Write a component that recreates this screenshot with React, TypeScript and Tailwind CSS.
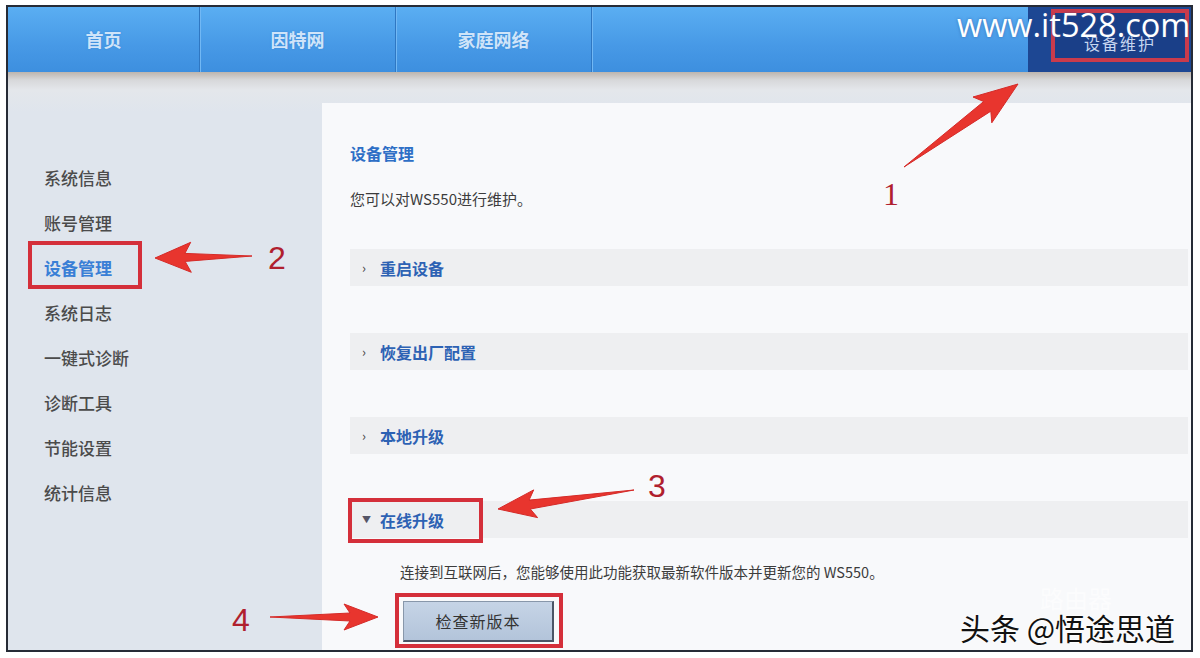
import React from 'react'

const sideItems = ['系统信息', '账号管理', '设备管理', '系统日志', '一键式诊断', '诊断工具', '节能设置', '统计信息']
const sections = ['重启设备', '恢复出厂配置', '本地升级']

function arrowPoints(tx: number, ty: number, px: number, py: number, headLen: number, headW: number, shaftW: number) {
  const len = Math.hypot(px - tx, py - ty)
  const dx = (px - tx) / len
  const dy = (py - ty) / len
  const nx = -dy
  const ny = dx
  const bx = px - dx * headLen
  const by = py - dy * headLen
  const wx = bx - dx * 6
  const wy = by - dy * 6
  const pts = [
    [tx, ty],
    [bx + nx * shaftW / 2, by + ny * shaftW / 2],
    [wx + nx * headW / 2, wy + ny * headW / 2],
    [px, py],
    [wx - nx * headW / 2, wy - ny * headW / 2],
    [bx - nx * shaftW / 2, by - ny * shaftW / 2],
  ]
  return pts.map(p => `${p[0].toFixed(1)},${p[1].toFixed(1)}`).join(' ')
}

function Arrows() {
  return (
    <svg className="absolute left-0 top-0 pointer-events-none" width="1200" height="658" viewBox="0 0 1200 658">
      <defs>
        <filter id="soft" x="-10%" y="-10%" width="120%" height="120%">
          <feGaussianBlur stdDeviation="0.6" />
        </filter>
      </defs>
      <g fill="#e8352f" stroke="#d42a28" strokeWidth="1" filter="url(#soft)">
        <polygon points={arrowPoints(904, 167, 1018, 84, 38, 32, 12)} />
        <polygon points={arrowPoints(252, 256, 155, 258, 30, 30, 8)} />
        <polygon points={arrowPoints(634, 490, 498, 509, 32, 28, 9)} />
        <polygon points={arrowPoints(270, 617, 378, 617, 28, 26, 8)} />
      </g>
    </svg>
  )
}

export default function App() {
  return (
    <div className="relative w-[1200px] h-[658px] bg-white overflow-hidden font-['Noto_Sans_CJK_SC',sans-serif]">
      <div className="ml-[6px] mt-[5px] w-[1187px] h-[647px] border-2 border-[#262b36] flex flex-col">
        {/* top nav */}
        <div className="h-[65px] flex bg-[linear-gradient(to_bottom,#5aaef2,#4799e6_60%,#3d8fdf)]">
          {['首页', '因特网', '家庭网络'].map((t, i) => (
            <div
              key={t}
              className={`flex items-center justify-center text-[18px] font-bold text-[#cfe4f9] [text-shadow:0_0_2px_#3a86d6] ${i === 0 ? 'w-[192px]' : 'w-[196px]'} border-r border-[#2f77c2] shadow-[1px_0_0_#72b8f4]`}
            >
              {t}
            </div>
          ))}
          <div className="flex-1" />
          <div className="relative w-[163px] bg-[#1d4793]">
            <div className="absolute left-[23px] top-[2px] w-[138px] h-[53px] border-[4px] border-[#c93b4c] bg-[#1a3f88] flex items-end justify-center pb-[6px]">
              <span className="text-[16px] leading-[18px] text-[#c6d6f0] tracking-[2px]">设备维护</span>
            </div>
          </div>
        </div>

        {/* body */}
        <div className="flex-1 flex bg-[linear-gradient(to_bottom,#bdb5ae_0px,#d7d8da_8px,#e4e7eb_18px,#dfe5ed_40px)]">
          <div className="w-[314px] pt-[83px] pl-[36px]">
            {sideItems.map(t => {
              const active = t === '设备管理'
              return (
                <div key={t} className="relative h-[45px] flex items-center">
                  <span className={`text-[17px] ${active ? 'text-[#3a7fd6] font-bold' : 'text-[#4b4b4b] font-medium'}`}>{t}</span>
                  {active && (
                    <span className="absolute left-[-16px] top-[-4px] w-[114px] h-[48px] border-[4px] border-[#d42f3a]" />
                  )}
                </div>
              )
            })}
          </div>

          <div className="flex-1 pt-[31px] flex flex-col">
            <div className="flex-1 bg-[#f8f9fb] pl-[28px] pr-[3px] pt-[39px]">
              <div className="h-[22px] leading-[22px] text-[16px] font-bold text-[#2e6fc6]">设备管理</div>
              <div className="mt-[24px] h-[22px] leading-[22px] text-[15px] text-[#3c3c3c]">您可以对WS550进行维护。</div>

              <div className="mt-[39px] flex flex-col gap-[47px]">
                {sections.map(s => (
                  <div key={s} className="h-[37px] bg-[#eeeff1] flex items-center pl-[12px]">
                    <span className="text-[13px] text-[#444] w-[18px]">›</span>
                    <span className="text-[16px] font-bold text-[#2d62b4]">{s}</span>
                  </div>
                ))}
                <div className="relative h-[37px] bg-[#eeeff1] flex items-center pl-[12px]">
                  <span className="text-[9px] text-[#556] w-[18px]">▼</span>
                  <span className="text-[16px] font-bold text-[#2d62b4]">在线升级</span>
                  <span className="absolute left-[-2px] top-[-3px] w-[135px] h-[45px] border-[4px] border-[#d42f3a]" />
                </div>
              </div>

              <div className="mt-[23px] ml-[50px] h-[22px] leading-[22px] text-[14.5px] text-[#3c3c3c]">
                连接到互联网后，您能够使用此功能获取最新软件版本并更新您的 WS550。
              </div>
              <div className="relative mt-[18px] ml-[53px] w-[151px] h-[41px]">
                <button className="w-full h-full bg-[linear-gradient(to_bottom,#c6d4e6,#b3c4da)] border border-[#8897aa] border-r-2 border-b-2 border-r-[#4a5566] border-b-[#4a5566] text-[16px] text-[#333] tracking-[1px]">
                  检查新版本
                </button>
                <span className="absolute left-[-8px] top-[-8px] w-[168px] h-[55px] border-[4px] border-[#d42f3a]" />
              </div>
            </div>
          </div>
        </div>
      </div>

      {/* watermark top-right */}
      <div className="absolute left-[957px] top-[5px] text-[32.5px] leading-[40px] text-white font-['Open_Sans',sans-serif] [text-shadow:0_0_3px_rgba(40,80,150,0.6)]">
        www.it528.com
      </div>

      {/* step numbers */}
      <div className="absolute left-[883px] top-[176px] text-[32px] leading-[36px] text-[#b0202e] font-['Liberation_Serif',serif]">1</div>
      <div className="absolute left-[268px] top-[240px] text-[32px] leading-[36px] text-[#b0202e] font-['Liberation_Sans',sans-serif]">2</div>
      <div className="absolute left-[648px] top-[468px] text-[32px] leading-[36px] text-[#b0202e] font-['Liberation_Sans',sans-serif]">3</div>
      <div className="absolute left-[232px] top-[602px] text-[32px] leading-[36px] text-[#b0202e] font-['Liberation_Sans',sans-serif]">4</div>

      <Arrows />

      {/* bottom watermark */}
      <div className="absolute left-[1040px] top-[584px] text-[24px] leading-[28px] text-white/60">路由器</div>
      <div className="absolute left-[960px] top-[608px] text-[30px] leading-[38px] text-[#111] [text-shadow:0_0_2px_#fff,0_0_2px_#fff,0_0_3px_#fff]">
        头条 @悟途思道
      </div>
    </div>
  )
}
